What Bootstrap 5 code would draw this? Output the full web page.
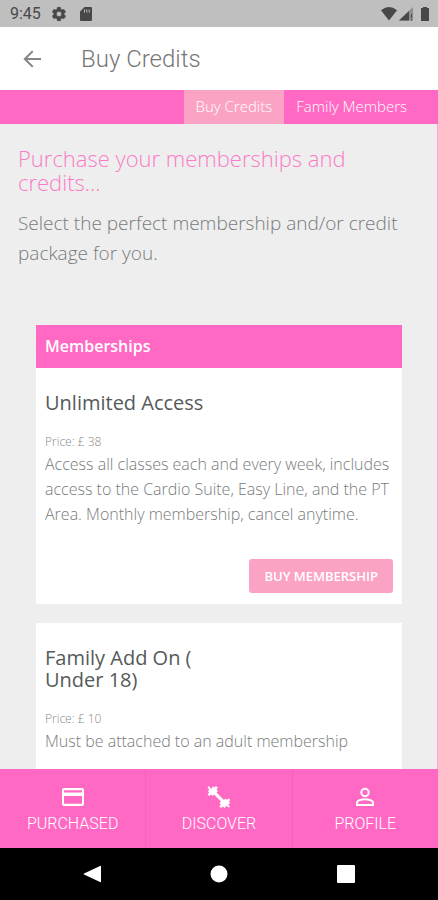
<!DOCTYPE html>
<html lang="en">
<head>
<meta charset="utf-8">
<meta name="viewport" content="width=device-width, initial-scale=1">
<title>Buy Credits</title>
<link href="https://cdn.jsdelivr.net/npm/bootstrap@5.3.0/dist/css/bootstrap.min.css" rel="stylesheet">
<style>
:root { --pink: #ff69c4; --pink-soft: #faa3c4; }
body { font-family: "Open Sans", sans-serif; font-weight: 300; color: #777b7b; background: #eee; }
svg { display: block; fill: currentColor; }
.roboto { font-family: Roboto, sans-serif; }
.status-bar { height: 27px; background: #bfbfbf; color: #484848; padding: 1px 8px 0 10px; font-size: 16px; font-weight: 400; }
.app-bar { height: 63px; padding: 0 20px; gap: 37px; color: #777; }
.app-title { font-size: 24px; line-height: 30px; font-weight: 300; }
.back-btn { color: #858585; }
.tabs-bar { background: var(--pink); padding-right: 19px; height: 34px; }
.tabs-bar a { color: #fff; font-size: 15px; line-height: 33px; padding: 0 12px; }
.tabs-bar a.active { background: var(--pink-soft); }
.page-area { min-height: 0; border-right: 1px solid #f9a8d4; padding: 22px 18px 0 18px; }
.intro-title { color: #fb7cc6; font-size: 22px; line-height: 24px; font-weight: 300; margin-bottom: 14px; }
.intro-text { font-size: 19px; line-height: 30px; margin-bottom: 57px; }
.plans { padding: 0 17px 0 18px; gap: 19px; }
.plan-header { background: var(--pink); font-size: 16px; line-height: 43px; font-weight: 600; padding: 0 9px; margin: 0; }
.plan-body { padding: 24px 9px 11px; }
.plan-title { color: #555a5a; font-size: 20px; line-height: 22px; font-weight: 400; margin-bottom: 18px; }
.plan-price { font-size: 12px; line-height: 20px; color: #858888; }
.plan-text { font-size: 16px; line-height: 25px; margin-bottom: 32px; color: #777b7b; }
.buy-btn { background: var(--pink-soft); color: #fff; font-size: 13px; line-height: 18px; font-weight: 600; padding: 8px 15px; border: 0; border-radius: 3px; }
.bottom-tabs { background: var(--pink); height: 79px; }
.bottom-tabs a { color: #fff; font-size: 16px; line-height: 20px; font-weight: 300; padding-top: 16px; gap: 5px; }
.bottom-tabs a + a { border-left: 1px solid #f264bb; }
.system-nav { height: 52px; background: #000; padding: 0 29px; }
.system-nav button { color: #fff; }
</style>
<script src="https://cdn.jsdelivr.net/npm/bootstrap@5.3.0/dist/js/bootstrap.bundle.min.js"></script>
</head>
<body class="vh-100 d-flex flex-column overflow-hidden">
<div class="status-bar roboto d-flex align-items-center flex-shrink-0">
  <span>9:45</span>
  <svg class="ms-2" width="22" height="16" viewBox="0 0 22 16" aria-hidden="true"><g transform="translate(2 0) scale(.667)"><path fill-rule="evenodd" stroke="currentColor" stroke-width="1" d="M19.4 13c.1-.3.1-.6.1-1s0-.7-.1-1l2.1-1.600c.2-.2.3-.5.1-.7l-2-3.400c-.1-.2-.4-.3-.6-.2l-2.500 1c-.5-.4-1.100-.7-1.700-1l-.4-2.600c0-.3-.2-.5-.5-.5h-4c-.2 0-.4.2-.5.5L9 5.100c-.6.3-1.200.6-1.700 1l-2.500-1c-.2-.1-.5 0-.6.2l-2 3.400c-.1.2-.1.5.1.7L4.500 11c0 .3-.1.7-.1 1s0 .7.1 1l-2.200 1.600c-.2.2-.2.5-.1.7l2 3.400c.1.2.4.3.6.2l2.500-1c.5.4 1.100.7 1.700 1l.4 2.600c.1.300.3.500.5.500h4c.3 0 .5-.2.500-.5l.4-2.600c.6-.3 1.200-.6 1.700-1l2.500 1c.2.1.5 0 .6-.2l2-3.400c.1-.2.1-.5-.1-.7L19.400 13ZM12 16a4 4 0 1 1 0-8 4 4 0 0 1 0 8Z"/></g></svg>
  <svg class="ms-2" width="14" height="16" viewBox="0 0 14 16" aria-hidden="true"><path fill-rule="evenodd" d="M5.500 1H12q1 0 1 1v12q0 1-1 1H2q-1 0-1-1V5.500ZM5 3.500v3h1v-3Zm2.300 0v3h1v-3Zm2.400 0v3h1v-3Z"/></svg>
  <svg class="ms-auto" width="50" height="16" viewBox="0 0 50 16" aria-hidden="true"><path d="M1 4.200Q9-2 17 4.200L9 14.500Z"/><path opacity=".4" d="M33 1v13.500H19Z"/><path d="M29 5v9.500H19Z"/><path d="M31 8h1v4h-1Zm0 5h1v1.500h-1Z"/><path d="M41 2h2V1h4v1h2V15H41Z"/></svg>
</div>
<header class="app-bar bg-white d-flex align-items-center flex-shrink-0">
  <button class="back-btn btn p-0 border-0" type="button" aria-label="Back"><svg width="24" height="24" viewBox="0 0 24 24"><path d="M21 11H7.300l6.200-6.200L12 3.400 3.400 12l8.600 8.600 1.500-1.400L7.300 13H21Z"/></svg></button>
  <h1 class="app-title roboto m-0">Buy Credits</h1>
</header>
<nav class="tabs-bar d-flex justify-content-end flex-shrink-0" aria-label="Sections">
  <a class="active text-decoration-none" href="#" aria-current="page">Buy Credits</a>
  <a class="text-decoration-none" href="#">Family Members</a>
</nav>
<main class="page-area flex-grow-1 overflow-hidden">
  <h2 class="intro-title">Purchase your memberships and credits...</h2>
  <p class="intro-text">Select the perfect membership and/or credit package for you.</p>
  <div class="plans d-flex flex-column">
    <section class="bg-white">
      <h3 class="plan-header text-white">Memberships</h3>
      <div class="plan-body">
        <div class="row g-0"><h4 class="plan-title col-6">Unlimited Access</h4></div>
        <div class="plan-price">Price: £ 38</div>
        <p class="plan-text">Access all classes each and every week, includes access to the Cardio Suite, Easy Line, and the PT Area. Monthly membership, cancel anytime.</p>
        <div class="text-end"><button class="buy-btn btn" type="button">BUY MEMBERSHIP</button></div>
      </div>
    </section>
    <section class="bg-white">
      <div class="plan-body">
        <div class="row g-0"><h4 class="plan-title col-6">Family Add On ( Under 18)</h4></div>
        <div class="plan-price">Price: £ 10</div>
        <p class="plan-text">Must be attached to an adult membership</p>
      </div>
    </section>
  </div>
</main>
<nav class="bottom-tabs roboto d-flex flex-shrink-0" aria-label="Main">
  <a class="col d-flex flex-column align-items-center text-decoration-none" href="#">
    <svg width="24" height="24" viewBox="0 0 24 24" aria-hidden="true"><path fill-rule="evenodd" d="M3 3h18q2 0 2 2v14q0 2-2 2H3q-2 0-2-2V5q0-2 2-2Zm0 2.200v2.300h18V5.200ZM3 11v7.800h18V11Z"/></svg>
    PURCHASED
  </a>
  <a class="col d-flex flex-column align-items-center text-decoration-none" href="#">
    <svg width="26" height="24" viewBox="0 0 26 24" aria-hidden="true"><path d="M5 4 7 1.200l1.400 1.400L10 1l2 2-1.600 1.600L12 6l-1.500 1.500 7.500 7.500 1.500-1.500 1.400 1.400 1.700-1.600 1.700 1.700-1.600 1.700L24.500 18 22 19.500l2 2-1.300 1.300-2-2L18.500 23 17 21.500 15 23l-1.700-1.800 1.600-1.700-1.400-1.500L15 16.500 8 9.500 6.500 11 5 9.500 3.300 11 1.500 9.200 3.200 7.500 1.800 6 3.500 5 1.500 2.500 3 1Z"/></svg>
    DISCOVER
  </a>
  <a class="col d-flex flex-column align-items-center text-decoration-none" href="#">
    <svg width="24" height="24" viewBox="0 0 24 24" aria-hidden="true"><g fill="none" stroke="currentColor" stroke-width="2"><circle cx="12" cy="7.500" r="3.700"/><path d="M4 20v-2q0-2 2.600-2.900 5.400-1.500 10.800 0Q20 16 20 18v2Z"/></g></svg>
    PROFILE
  </a>
</nav>
<div class="system-nav d-flex justify-content-around align-items-center flex-shrink-0">
  <button class="btn p-0 border-0" type="button" aria-label="System back"><svg width="20" height="20" viewBox="0 0 20 20"><path d="M18 2q1-.5 1 .5v15q0 1-1 .5L2 10.500q-.7-.5 0-1Z"/></svg></button>
  <button class="btn p-0 border-0" type="button" aria-label="Home"><svg width="20" height="20" viewBox="0 0 20 20"><circle cx="10" cy="10" r="8.500"/></svg></button>
  <button class="btn p-0 border-0" type="button" aria-label="Overview"><svg width="20" height="20" viewBox="0 0 20 20"><rect x="1" y="1" width="18" height="18" rx="1"/></svg></button>
</div>
</body>
</html>
